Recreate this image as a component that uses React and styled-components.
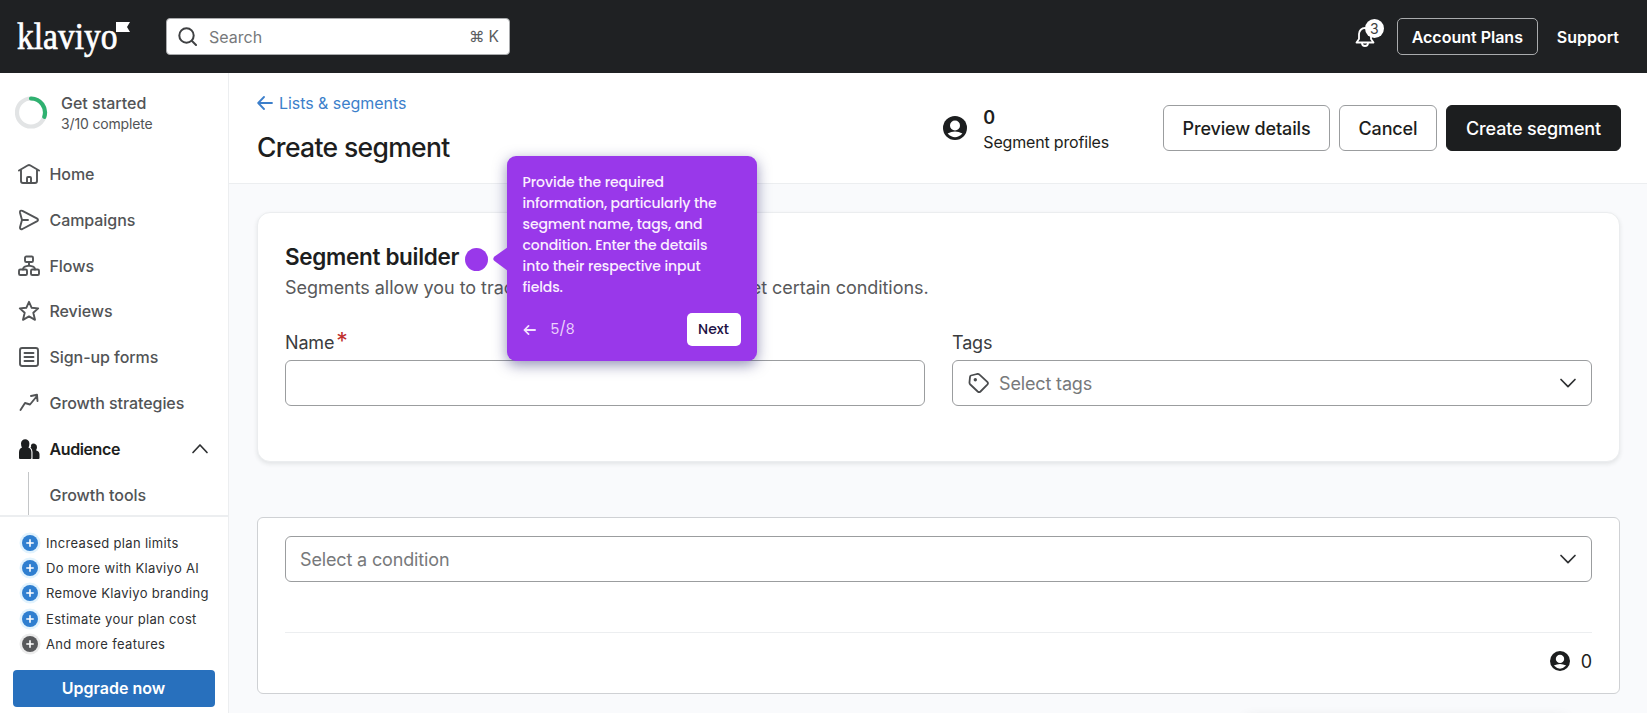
import React from "react";
import styled, { createGlobalStyle } from "styled-components";

const GlobalStyle = createGlobalStyle`
  * {
    box-sizing: border-box;
  }

  body {
    margin: 0;
    font-family: "Inter", "Liberation Sans", sans-serif;
    color: #1d1e20;
    background: #f9fafc;
    overflow: hidden;
  }

  button {
    font-family: inherit;
    padding: 0;
    cursor: pointer;
  }
`;

const Page = styled.div`
  display: flex;
  flex-direction: column;
  height: 713px;
  overflow: hidden;
`;
const TopBar = styled.header`
  display: flex;
  align-items: center;
  flex: none;
  height: 73px;
  padding: 0 28px 0 17px;
  background: #1f2123;
  color: #fff;
`;
const Logo = styled.div`
  display: flex;
  align-items: flex-start;
  width: 149px;
  height: 38px;
`;
const Wordmark = styled.span`
  width: 99px;
  font-family: "Liberation Serif", serif;
  font-size: 38.5px;
  line-height: 37px;
  white-space: nowrap;
  transform: scaleX(0.87);
  transform-origin: left;
  -webkit-text-stroke: 0.7px #fff;
`;
const Flag = styled.svg`
  flex: none;
  width: 14px;
  height: 10px;
  margin-top: 4px;
`;
const SearchBox = styled.div`
  display: flex;
  align-items: center;
  width: 344px;
  height: 37px;
  padding: 0 10px 0 11px;
  border: 1px solid #a9abad;
  border-radius: 4px;
  background: #fff;
  color: #77797b;
  font-size: 16px;
`;
const SearchLabel = styled.span`
  flex: 1;
  margin-left: 12px;
`;
const Shortcut = styled.span`
  display: flex;
  align-items: center;
  gap: 4px;
  color: #5b5d5f;
  font-size: 15.5px;
`;
const TopActions = styled.div`
  display: flex;
  align-items: center;
  margin-left: auto;
`;
const Bell = styled.div`
  position: relative;
  width: 20px;
  height: 24px;
  margin-right: 22px;
`;
const Badge = styled.span`
  position: absolute;
  top: -6px;
  left: 10px;
  width: 19px;
  height: 19px;
  border-radius: 50%;
  background: #fff;
  color: #3c3e40;
  font-size: 14px;
  line-height: 19px;
  text-align: center;
`;
const PlansButton = styled.button`
  width: 141px;
  height: 37px;
  border: 1px solid #a9abad;
  border-radius: 5px;
  background: transparent;
  color: #fff;
  font-size: 16px;
  font-weight: 600;
`;
const Support = styled.span`
  margin-left: 19px;
  font-size: 16px;
  font-weight: 600;
`;

const Body = styled.div`
  display: flex;
  flex: 1;
  min-height: 0;
`;
const Sidebar = styled.aside`
  display: flex;
  flex-direction: column;
  flex: none;
  width: 229px;
  border-right: 1px solid #eceef0;
  background: #fff;
`;
const Progress = styled.div`
  display: flex;
  align-items: center;
  gap: 13px;
  height: 78px;
  padding: 0 0 0 15px;
`;
const ProgressTitle = styled.div`
  font-size: 16px;
  font-weight: 500;
  line-height: 22px;
  color: #525456;
`;
const ProgressNote = styled.div`
  font-size: 14px;
  line-height: 19px;
  letter-spacing: -0.15px;
  color: #525456;
`;
const Nav = styled.nav`
  flex: 1;
  min-height: 0;
  overflow: hidden;
`;
const NavItem = styled.a`
  display: flex;
  align-items: center;
  height: 45.83px;
  padding: 0 19px 0 18px;
  color: ${({ $active }) => ($active ? "#1d1e20" : "#525456")};
  font-size: 16px;
  font-weight: ${({ $active }) => ($active ? 600 : 500)};
  letter-spacing: ${({ $active }) => ($active ? "-0.4px" : "-0.06px")};
`;
const NavLabel = styled.span`
  flex: 1;
  margin-left: 9.5px;
`;
const SubItem = styled.a`
  display: flex;
  align-items: center;
  height: 46px;
  margin-left: 28px;
  padding-left: 20.5px;
  border-left: 1px solid #c4c6c8;
  color: #525456;
  font-size: 16px;
  font-weight: 500;
  letter-spacing: -0.04px;
`;
const Upsell = styled.div`
  height: 198px;
  padding: 13px 14px 0 12.5px;
  border-top: 2px solid #eceef0;
`;
const Feature = styled.div`
  display: flex;
  align-items: center;
  height: 25.3px;
  padding-left: 9.5px;
  color: #2f3133;
  font-size: 13px;
  letter-spacing: 0.32px;
  white-space: nowrap;
`;
const Plus = styled.svg`
  flex: none;
  width: 16px;
  height: 16px;
  margin-right: 8px;
  border-radius: 50%;
  background: ${({ $muted }) => ($muted ? "#58595b" : "#2f7fd0")};
  box-shadow: 0 0 0 2.5px ${({ $muted }) => ($muted ? "#ececec" : "#e2f3fd")};
`;
const UpgradeButton = styled.button`
  width: 202px;
  height: 37px;
  margin-top: 13.5px;
  border: 0;
  border-radius: 4px;
  background: #2870bd;
  color: #fff;
  font-size: 16px;
  font-weight: 600;
`;

const Main = styled.main`
  display: flex;
  flex-direction: column;
  flex: 1;
  min-width: 0;
`;
const PageHeader = styled.div`
  display: flex;
  flex: none;
  height: 111px;
  padding: 19px 26px 0 28px;
  border-bottom: 1px solid #eceef0;
  background: #fff;
`;
const BackLink = styled.a`
  display: flex;
  align-items: center;
  gap: 6px;
  height: 22px;
  color: #3c7fcb;
  font-size: 16px;
  letter-spacing: -0.05px;
`;
const PageTitle = styled.h1`
  margin: 16px 0 0;
  font-size: 26.5px;
  font-weight: 500;
  line-height: 34px;
  letter-spacing: -0.65px;
`;
const Profiles = styled.div`
  display: flex;
  align-items: center;
  gap: 16px;
  height: 50px;
  margin: 11px 54px 0 auto;
`;
const ProfileText = styled.div`
  padding-top: 4px;
`;
const ProfileCount = styled.div`
  font-size: 18px;
  font-weight: 600;
  line-height: 24px;
`;
const ProfileLabel = styled.div`
  font-size: 16px;
  line-height: 24px;
  letter-spacing: -0.18px;
`;
const Actions = styled.div`
  display: flex;
  gap: 9px;
  margin-top: 13px;
`;
const ActionButton = styled.button`
  width: ${({ $width }) => $width}px;
  height: 46px;
  border: 1px solid ${({ $primary }) => ($primary ? "#1c1e1f" : "#9b9d9f")};
  border-radius: 6px;
  background: ${({ $primary }) => ($primary ? "#1c1e1f" : "#fff")};
  color: ${({ $primary }) => ($primary ? "#fff" : "#1d1e20")};
  font-size: 18px;
  font-weight: 500;
  letter-spacing: -0.15px;
`;

const Content = styled.div`
  flex: 1;
  padding: 28px 27px 0 28px;
`;
const Card = styled.section`
  position: relative;
  height: 250px;
  padding: 31px 27px 0;
  border: 1px solid #ebedef;
  border-radius: 13px;
  background: #fff;
  box-shadow: 0 2px 4px rgba(30, 35, 40, 0.1);
`;
const CardTitle = styled.h2`
  margin: 0;
  font-size: 22.5px;
  font-weight: 600;
  line-height: 26px;
  letter-spacing: -0.32px;
`;
const CardText = styled.p`
  margin: 5px 0 0;
  color: #58595b;
  font-size: 18px;
  line-height: 26px;
  letter-spacing: -0.05px;
`;
const Fields = styled.div`
  display: grid;
  grid-template-columns: 1fr 1fr;
  gap: 27px;
  margin-top: 29px;
`;
const FieldLabel = styled.div`
  display: flex;
  gap: 2px;
  height: 30px;
  color: #3a3c3e;
  font-size: 18px;
  line-height: 25px;
  letter-spacing: -0.15px;
`;
const Required = styled.span`
  color: #c0302b;
  font-size: 23px;
  line-height: 23px;
`;
const Control = styled.div`
  display: flex;
  align-items: center;
  justify-content: space-between;
  height: 46px;
  padding: 0 14px;
  border: 1px solid #9b9d9f;
  border-radius: 6px;
  background: #fff;
  color: #77797b;
  font-size: 18px;
`;
const Placeholder = styled.span`
  display: flex;
  align-items: center;
  gap: 10px;
  letter-spacing: -0.15px;
`;
const ConditionPanel = styled.section`
  height: 177px;
  margin-top: 55px;
  padding: 18px 27px 0;
  border: 1px solid #cfd1d4;
  border-radius: 6px;
  background: #fff;
`;
const PanelFooter = styled.div`
  display: flex;
  align-items: center;
  justify-content: flex-end;
  gap: 11px;
  height: 57px;
  margin-top: 50px;
  border-top: 1px solid #eceef0;
  font-size: 18px;
`;
// soft top edge of the floating bar that sits just under the fold
const BarShadow = styled.div`
  width: 320px;
  height: 20px;
  margin: 25px 54px 0 auto;
  box-shadow: 0 0 14px rgba(30, 35, 40, 0.12);
`;

const Marker = styled.span`
  position: absolute;
  top: 34.5px;
  left: 207px;
  width: 23px;
  height: 23px;
  border-radius: 50%;
  background: #9938ea;
`;
const Tooltip = styled.div`
  position: absolute;
  top: -57px;
  left: 248.5px;
  width: 250px;
  height: 205px;
  padding: 16px 16px 0;
  border-radius: 9px;
  background: #9938ea;
  box-shadow: 0 4px 14px rgba(40, 40, 110, 0.5);
  color: #fbeeff;
  font-family: "Poppins", "Inter", sans-serif;
`;
const Pointer = styled.svg`
  position: absolute;
  top: 91px;
  left: -15px;
  width: 16px;
  height: 24px;
`;
const TooltipText = styled.div`
  height: 21px;
  font-size: 14px;
  font-weight: 500;
  line-height: 21px;
  letter-spacing: ${({ $spacing }) => $spacing}px;
  white-space: nowrap;
`;
const TooltipFooter = styled.div`
  display: flex;
  align-items: center;
  height: 33px;
  margin-top: 15px;
`;
const Step = styled.span`
  flex: 1;
  margin-left: 15px;
  color: #ecd3fc;
  font-size: 14px;
  letter-spacing: -0.1px;
`;
const NextButton = styled.button`
  width: 54px;
  height: 33px;
  border: 0;
  border-radius: 5px;
  background: #fff;
  color: #1d1145;
  font-size: 14px;
  font-weight: 500;
`;

const Icon = ({ size = 22, stroke = 1.9, children }) => (
  <svg
    width={size}
    height={size}
    viewBox="0 0 22 22"
    fill="none"
    stroke="currentColor"
    strokeWidth={stroke}
    strokeLinecap="round"
    strokeLinejoin="round"
  >
    {children}
  </svg>
);

const NAV_ITEMS = [
  {
    label: "Home",
    icon: (
      <>
        <path d="M1 7.5 10 2.3q1-.5 2 0L21 7.5M3 7v11q0 2 2 2h12q2 0 2-2V7" />
        <path d="M9 19.5V15q0-1 1-1h2q1 0 1 1v4.5" />
      </>
    ),
  },
  {
    label: "Campaigns",
    icon: (
      <path d="M2 3.7Q1.7.9 4.4 1.9L18.8 9.4q2.4 1.5 0 3L4.4 20q-2.7.9-2.4-1.8L4 11 2 3.7ZM4 11h6" />
    ),
  },
  {
    label: "Flows",
    icon: (
      <>
        <rect x="7" y="1.5" width="8" height="5.5" rx="1.3" />
        <rect x="1" y="14.5" width="8" height="5.5" rx="1.3" />
        <rect x="13" y="14.5" width="8" height="5.5" rx="1.3" />
        <path d="M11 7v2.5M5 14.5c0-5 6-2 6-5 0 3 6 0 6 5" />
      </>
    ),
  },
  {
    label: "Reviews",
    icon: (
      <path d="m11 1.8 2.7 6 6.5.6-4.9 4.4 1.7 7L11 16.400 5 19.800l1.700-7-4.900-4.400 6.500-.6Z" />
    ),
  },
  {
    label: "Sign-up forms",
    icon: (
      <>
        <rect x="2" y="2" width="18" height="18" rx="2.2" />
        <path d="M6.5 7h9M6.5 11h9M6.5 15h9" />
      </>
    ),
  },
  {
    label: "Growth strategies",
    icon: <path d="M2.5 18 7 11l5 1.5L19 4M13 4l6-1.2.5 6.2" />,
  },
];

const FEATURES = [
  "Increased plan limits",
  "Do more with Klaviyo AI",
  "Remove Klaviyo branding",
  "Estimate your plan cost",
  "And more features",
];

const TIP_LINES = [
  { text: "Provide the required", spacing: -0.05 },
  { text: "information, particularly the", spacing: -0.11 },
  { text: "segment name, tags, and", spacing: -0.08 },
  { text: "condition. Enter the details", spacing: -0.08 },
  { text: "into their respective input", spacing: -0.07 },
  { text: "fields.", spacing: -0.1 },
];

const ACTIONS = [
  { label: "Preview details", width: 167 },
  { label: "Cancel", width: 98 },
  { label: "Create segment", width: 175, primary: true },
];

const Avatar = ({ size }) => (
  <svg width={size} height={size} viewBox="0 0 24 24">
    <circle cx="12" cy="12" r="12" fill="#1c1e1f" />
    <circle cx="12" cy="9.5" r="5" fill="#fff" />
    <path d="M4.6 17.5Q12 13.5 19.4 17.5 12 25 4.6 17.5Z" fill="#fff" />
  </svg>
);

const Chevron = ({ up }) => (
  <svg
    width="18"
    height="18"
    viewBox="0 0 18 18"
    fill="none"
    stroke="#2f3133"
    strokeWidth="1.7"
    strokeLinecap="round"
    strokeLinejoin="round"
  >
    <path d={up ? "M2 12.5 9 5l7 7.5" : "M2 5.5 9 12.7l7-7.2"} />
  </svg>
);

const TopNavigation = () => (
  <TopBar>
    <Logo>
      <Wordmark>klaviyo</Wordmark>
      <Flag viewBox="0 0 14 10">
        <path d="M0 0h14l-3 5 3 5H0Z" fill="#fff" />
      </Flag>
    </Logo>
    <SearchBox>
      <svg width="19" height="19" viewBox="0 0 19 19" fill="none" stroke="#3f4143" strokeWidth="2">
        <circle cx="8.5" cy="8.5" r="7.2" />
        <path d="m14 14 4 4" strokeLinecap="round" />
      </svg>
      <SearchLabel>Search</SearchLabel>
      <Shortcut>
        <span>⌘</span>
        <span>K</span>
      </Shortcut>
    </SearchBox>
    <TopActions>
      <Bell>
        <svg width="20" height="24" viewBox="0 0 20 24" fill="none" stroke="#fff" strokeWidth="1.8">
          <path d="M4 14V9a6 6 0 0 1 12 0v5l2.5 3.5h-17Z" strokeLinejoin="round" />
          <path d="M7 18a3 3 0 0 0 6 0" />
        </svg>
        <Badge>3</Badge>
      </Bell>
      <PlansButton>Account Plans</PlansButton>
      <Support>Support</Support>
    </TopActions>
  </TopBar>
);

const SideNavigation = () => (
  <Sidebar>
    <Progress>
      <svg width="33" height="33" viewBox="0 0 33 33" fill="none" strokeWidth="4.2">
        <circle cx="16" cy="16.5" r="14" stroke="#e2e4e5" />
        <path d="M16 2.5A14 14 0 0 1 29.3 20.8" stroke="#2fb170" strokeLinecap="round" />
      </svg>
      <div>
        <ProgressTitle>Get started</ProgressTitle>
        <ProgressNote>3/10 complete</ProgressNote>
      </div>
    </Progress>
    <Nav>
      {NAV_ITEMS.map((item) => (
        <NavItem key={item.label}>
          <Icon>{item.icon}</Icon>
          <NavLabel>{item.label}</NavLabel>
        </NavItem>
      ))}
      <NavItem $active>
        <svg width="22" height="22" viewBox="0 0 22 22" fill="#1c1e1f">
          <path d="M3 5.5a4.2 4.2 0 0 1 8.4 0q0 2.5-1 4 3 1 3 5V20q0 1-1 1H2q-1 0-1-1v-5.5q0-4 3-5-1-1.5-1-4Z" />
          <path d="M13 7a3.3 3.3 0 0 1 6 2q0 2-1 3.2 3.5 1 3.5 4.3V20q0 1-1 1h-6v-7q0-3-2-4.5 1-1 .5-2.5Z" />
        </svg>
        <NavLabel>Audience</NavLabel>
        <Chevron up />
      </NavItem>
      <SubItem>Growth tools</SubItem>
    </Nav>
    <Upsell>
      {FEATURES.map((feature, index) => (
        <Feature key={feature}>
          <Plus viewBox="0 0 15 15" $muted={index === FEATURES.length - 1}>
            <path d="M7.5 4v7M4 7.5h7" stroke="#fff" strokeWidth="1.5" />
          </Plus>
          {feature}
        </Feature>
      ))}
      <UpgradeButton>Upgrade now</UpgradeButton>
    </Upsell>
  </Sidebar>
);

const Walkthrough = () => (
  <>
    <Marker />
    <Tooltip>
      <Pointer viewBox="0 0 16 24">
        <path d="M16 0 2.5 9.5Q0 12 2.5 14L16 24Z" fill="#9938ea" />
      </Pointer>
      {TIP_LINES.map((line) => (
        <TooltipText key={line.text} $spacing={line.spacing}>
          {line.text}
        </TooltipText>
      ))}
      <TooltipFooter>
        <svg width="13" height="12" viewBox="0 0 14 12" fill="none" stroke="#f3e2ff" strokeWidth="1.9">
          <path d="M13 6H2M6 1.5 1.5 6 6 10.5" strokeLinecap="round" strokeLinejoin="round" />
        </svg>
        <Step>5/8</Step>
        <NextButton>Next</NextButton>
      </TooltipFooter>
    </Tooltip>
  </>
);

const SegmentHeader = () => (
  <PageHeader>
    <div>
      <BackLink>
        <svg width="16" height="14" viewBox="0 0 16 14" fill="none" stroke="currentColor" strokeWidth="1.8">
          <path d="M15 7H1.5M7 1 1.2 7 7 13" strokeLinecap="round" strokeLinejoin="round" />
        </svg>
        Lists &amp; segments
      </BackLink>
      <PageTitle>Create segment</PageTitle>
    </div>
    <Profiles>
      <Avatar size={24} />
      <ProfileText>
        <ProfileCount>0</ProfileCount>
        <ProfileLabel>Segment profiles</ProfileLabel>
      </ProfileText>
    </Profiles>
    <Actions>
      {ACTIONS.map((action) => (
        <ActionButton key={action.label} $width={action.width} $primary={action.primary}>
          {action.label}
        </ActionButton>
      ))}
    </Actions>
  </PageHeader>
);

const App = () => {
  return (
    <Page>
      <GlobalStyle />
      <TopNavigation />
      <Body>
        <SideNavigation />
        <Main>
          <SegmentHeader />
          <Content>
            <Card>
              <CardTitle>Segment builder</CardTitle>
              <CardText>
                Segments allow you to track groups of profiles who meet certain conditions.
              </CardText>
              <Fields>
                <div>
                  <FieldLabel>
                    Name <Required>*</Required>
                  </FieldLabel>
                  <Control />
                </div>
                <div>
                  <FieldLabel>Tags</FieldLabel>
                  <Control>
                    <Placeholder>
                      <svg width="22" height="22" viewBox="0 0 22 22" fill="none" stroke="#4a4c4e" strokeWidth="1.8">
                        <path
                          d="M4 3.5 10 2q1.500-.3 2.500.7l7.800 7.200q1.300 1.400 0 2.800L13.500 19.500q-1.400 1.200-2.800 0L3.300 12.500q-1-1-.8-2.500L3 5q.1-1.200 1-1.500Z"
                          strokeLinejoin="round"
                        />
                        <circle cx="8.3" cy="7.8" r="0.8" fill="#4a4c4e" />
                      </svg>
                      Select tags
                    </Placeholder>
                    <Chevron />
                  </Control>
                </div>
              </Fields>
              <Walkthrough />
            </Card>
            <ConditionPanel>
              <Control>
                <Placeholder>Select a condition</Placeholder>
                <Chevron />
              </Control>
              <PanelFooter>
                <Avatar size={20} />
                <span>0</span>
              </PanelFooter>
            </ConditionPanel>
            <BarShadow />
          </Content>
        </Main>
      </Body>
    </Page>
  );
};

export default App;
